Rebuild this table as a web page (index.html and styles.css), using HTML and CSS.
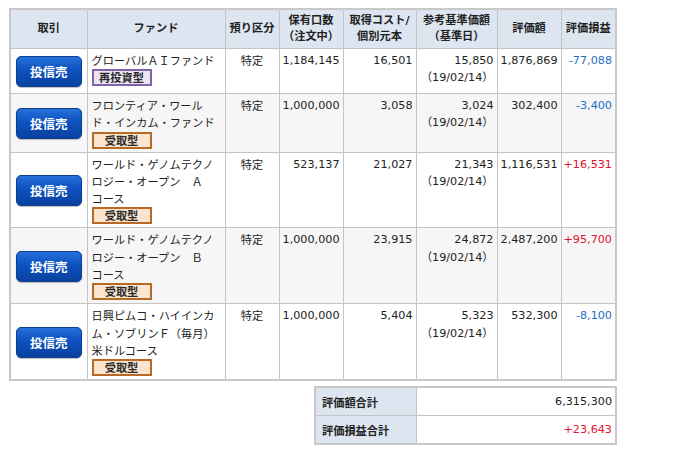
FILE: index.html
```html
<!DOCTYPE html>
<html lang="ja">
<head>
<meta charset="utf-8">
<title>保有投資信託</title>
<link rel="stylesheet" href="styles.css">
</head>
<body>
<div class="wrap">
  <table class="holdings">
    <colgroup>
      <col class="c-act"><col class="c-fund"><col class="c-acc"><col class="c-qty">
      <col class="c-cost"><col class="c-nav"><col class="c-val"><col class="c-pl">
    </colgroup>
    <thead>
      <tr>
        <th>取引</th>
        <th>ファンド</th>
        <th>預り区分</th>
        <th>保有口数<br>（注文中）</th>
        <th>取得コスト/<br>個別元本</th>
        <th>参考基準価額<br>（基準日）</th>
        <th>評価額</th>
        <th>評価損益</th>
      </tr>
    </thead>
    <tbody>
      <tr>
        <td class="act"><a class="sell-btn" href="#">投信売</a></td>
        <td class="fund">グローバルＡＩファンド<span class="badge badge-re">再投資型</span></td>
        <td class="acc">特定</td>
        <td class="num">1,184,145</td>
        <td class="num">16,501</td>
        <td class="num">15,850<br>（19/02/14）</td>
        <td class="num">1,876,869</td>
        <td class="num neg">-77,088</td>
      </tr>
      <tr class="alt">
        <td class="act"><a class="sell-btn" href="#">投信売</a></td>
        <td class="fund">フロンティア・ワール<br>ド・インカム・ファンド<span class="badge badge-rc">受取型</span></td>
        <td class="acc">特定</td>
        <td class="num">1,000,000</td>
        <td class="num">3,058</td>
        <td class="num">3,024<br>（19/02/14）</td>
        <td class="num">302,400</td>
        <td class="num neg">-3,400</td>
      </tr>
      <tr>
        <td class="act"><a class="sell-btn" href="#">投信売</a></td>
        <td class="fund">ワールド・ゲノムテクノ<br>ロジー・オープン　Ａ<br>コース<span class="badge badge-rc">受取型</span></td>
        <td class="acc">特定</td>
        <td class="num">523,137</td>
        <td class="num">21,027</td>
        <td class="num">21,343<br>（19/02/14）</td>
        <td class="num">1,116,531</td>
        <td class="num pos">+16,531</td>
      </tr>
      <tr class="alt">
        <td class="act"><a class="sell-btn" href="#">投信売</a></td>
        <td class="fund">ワールド・ゲノムテクノ<br>ロジー・オープン　Ｂ<br>コース<span class="badge badge-rc">受取型</span></td>
        <td class="acc">特定</td>
        <td class="num">1,000,000</td>
        <td class="num">23,915</td>
        <td class="num">24,872<br>（19/02/14）</td>
        <td class="num">2,487,200</td>
        <td class="num pos">+95,700</td>
      </tr>
      <tr>
        <td class="act"><a class="sell-btn" href="#">投信売</a></td>
        <td class="fund">日興ピムコ・ハイインカ<br>ム・ソブリンＦ（毎月）<br>米ドルコース<span class="badge badge-rc">受取型</span></td>
        <td class="acc">特定</td>
        <td class="num">1,000,000</td>
        <td class="num">5,404</td>
        <td class="num">5,323<br>（19/02/14）</td>
        <td class="num">532,300</td>
        <td class="num neg">-8,100</td>
      </tr>
    </tbody>
  </table>

  <table class="summary">
    <tr>
      <th>評価額合計</th>
      <td>6,315,300</td>
    </tr>
    <tr>
      <th>評価損益合計</th>
      <td class="pos">+23,643</td>
    </tr>
  </table>
</div>
</body>
</html>
```

FILE: styles.css
```css
html, body {
  margin: 0;
  padding: 0;
  background: #ffffff;
}

body {
  font-family: "DejaVu Sans", "Noto Sans CJK JP", sans-serif;
  font-size: 11.2px;
  color: #222222;
}

.wrap {
  width: 606px;
  margin: 8px 0 0 11px;
  display: flex;
  flex-direction: column;
  align-items: flex-end;
}

.holdings {
  width: 606px;
  table-layout: fixed;
  border-collapse: collapse;
  border: 2px solid #c8c8c8;
}

.c-act { width: 77px; }
.c-fund { width: 138px; }
.c-acc { width: 54px; }
.c-qty { width: 64px; }
.c-cost { width: 73px; }
.c-nav { width: 81px; }
.c-val { width: 64px; }
.c-pl { width: 55px; }

.holdings th {
  background: #dde5f0;
  border: 1px solid #c4c4c4;
  font-weight: bold;
  line-height: 16px;
  height: 30px;
  padding: 3px 0;
  text-align: center;
  vertical-align: middle;
  white-space: nowrap;
}

.holdings td {
  border: 1px solid #c4c4c4;
  padding: 3px 4px 3px 4px;
  line-height: 17.3px;
  vertical-align: top;
  white-space: nowrap;
}

.holdings tr.alt td {
  background: #f6f6f6;
}

.holdings td.act {
  vertical-align: middle;
  text-align: center;
  padding: 3px 0;
}

.sell-btn {
  display: flex;
  align-items: center;
  justify-content: center;
  width: 64px;
  height: 29px;
  margin: 4px auto 3px;
  border: 1px solid #0b3f93;
  border-radius: 5px;
  background: linear-gradient(to bottom, #2670d8 0%, #0d52c0 45%, #0941a0 100%);
  color: #ffffff;
  font-family: "Noto Sans CJK JP", sans-serif;
  font-weight: bold;
  font-size: 12.5px;
  text-decoration: none;
  box-shadow: 0 1px 1px rgba(0, 0, 0, 0.25);
}

.holdings td.fund {
  font-family: "Noto Sans CJK JP", sans-serif;
  overflow: hidden;
}

.badge {
  display: flex;
  align-items: center;
  justify-content: center;
  box-sizing: border-box;
  width: 60px;
  height: 17px;
  font-weight: bold;
  font-size: 11.2px;
  line-height: 13px;
  color: #2a2a2a;
}

.badge-re {
  border: 2px solid #7f63a8;
  background: #ebe5f4;
}

.badge-rc {
  border: 2px solid #b66a26;
  background: #fbe5cf;
}

.holdings td.acc {
  text-align: center;
  font-family: "Noto Sans CJK JP", sans-serif;
}

.holdings td.num {
  text-align: right;
  padding-left: 0;
  padding-right: 3px;
}

.neg { color: #1f6fbf; }
.pos { color: #e0142c; }

.summary {
  width: 303px;
  margin-top: 5px;
  border-collapse: collapse;
  border: 2px solid #c8c8c8;
}

.summary th {
  width: 88px;
  background: #dde5f0;
  border: 1px solid #c4c4c4;
  font-weight: bold;
  text-align: left;
  padding: 0 6px;
  height: 27px;
  white-space: nowrap;
}

.summary td {
  border: 1px solid #c4c4c4;
  text-align: right;
  padding: 0 3px;
  height: 27px;
}
```
